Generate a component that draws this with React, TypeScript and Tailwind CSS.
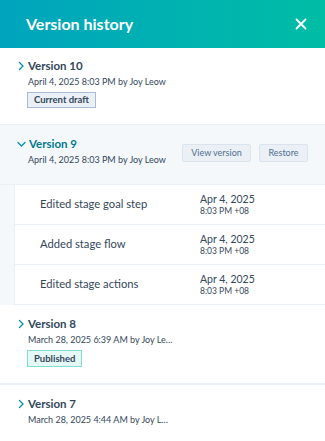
import { X } from 'lucide-react';

const font = { fontFamily: 'Lato, "Noto Sans", "Liberation Sans", sans-serif' };

function Chevron({ open }: { open?: boolean }) {
  if (open) {
    return (
      <svg width="9" height="9" viewBox="0 0 9 9" className="mr-[3px] shrink-0">
        <path d="M1 2.5 L4.5 6 L8 2.5" fill="none" stroke="#0091ae" strokeWidth="1.3" strokeLinecap="round" />
      </svg>
    );
  }
  return (
    <svg width="9" height="10" viewBox="0 0 9 10" className="mr-[2px] shrink-0">
      <path d="M2.5 1.5 L6 5 L2.5 8.5" fill="none" stroke="#0091ae" strokeWidth="1.3" strokeLinecap="round" />
    </svg>
  );
}

const changes = ['Edited stage goal step', 'Added stage flow', 'Edited stage actions'];

export default function App() {
  return (
    <div className="w-[325px] h-[441px] overflow-hidden bg-white text-[#33475b]" style={font}>
      <div className="h-[48px] flex items-center justify-between pl-[26px] pr-[15px] bg-gradient-to-r from-[#00a4bd] to-[#00bda5]">
        <h1 className="text-[16px] font-bold text-white">Version history</h1>
        <X className="w-[18px] h-[18px] text-white" strokeWidth={2.4} />
      </div>

      {/* Version 10 */}
      <div className="pt-[10px] pb-[16px] pl-[17px] border-b border-[#eaf0f6]">
        <div className="flex items-center h-[16px]">
          <Chevron />
          <span className="text-[11.5px] font-bold">Version 10</span>
        </div>
        <div className="pl-[11px] text-[9px] leading-[14px] mt-[1px]">April 4, 2025 8:03 PM by Joy Leow</div>
        <div className="flex pl-[10px] mt-[3px]">
          <span className="h-[16px] leading-[14px] px-[6px] text-[9.5px] font-bold bg-[#eaf0f6] border border-[#a8bcd3]">
            Current draft
          </span>
        </div>
      </div>

      {/* Version 9 */}
      <div className="bg-[#f5f8fa] h-[60px] pt-[11px] pl-[17px] pr-[17px] flex justify-between border-b border-[#eaf0f6]">
        <div>
          <div className="flex items-center h-[16px]">
            <Chevron open />
            <span className="text-[11.5px] font-bold text-[#007a8c]">Version 9</span>
          </div>
          <div className="pl-[11px] text-[9px] leading-[14px] mt-[1px]">April 4, 2025 8:03 PM by Joy Leow</div>
        </div>
        <div className="flex gap-[8px] pt-[8px]">
          <button className="h-[18px] w-[69px] text-[9px] text-[#516f90] bg-[#eaf0f6] border border-[#dbe3ec] rounded-[2px]">
            View version
          </button>
          <button className="h-[18px] w-[49px] text-[9px] text-[#516f90] bg-[#eaf0f6] border border-[#dbe3ec] rounded-[2px]">
            Restore
          </button>
        </div>
      </div>

      <div className="flex">
        <div className="w-[15px] bg-[#f5f8fa] border-r border-[#eaf0f6]" />
        <div className="flex-1">
          {changes.map((label) => (
            <div key={label} className="h-[40px] flex items-center border-b border-[#eaf0f6]">
              <div className="w-[185px] pl-[25px] text-[11.2px]">{label}</div>
              <div className="leading-none">
                <div className="text-[10.5px]">Apr 4, 2025</div>
                <div className="text-[8.5px] mt-[3px]">8:03 PM +08</div>
              </div>
            </div>
          ))}
        </div>
      </div>

      {/* Version 8 */}
      <div className="pt-[11px] pb-[16px] pl-[17px] border-b-2 border-[#eaf0f6]">
        <div className="flex items-center h-[16px]">
          <Chevron />
          <span className="text-[11.5px] font-bold">Version 8</span>
        </div>
        <div className="pl-[11px] text-[9px] leading-[14px] mt-[1px]">March 28, 2025 6:39 AM by Joy Le…</div>
        <div className="flex pl-[10px] mt-[3px]">
          <span className="h-[17px] leading-[15px] px-[6px] text-[9.5px] font-bold bg-[#e5f8f6] border border-[#7fded2]">
            Published
          </span>
        </div>
      </div>

      {/* Version 7 */}
      <div className="pt-[11px] pl-[17px]">
        <div className="flex items-center h-[16px]">
          <Chevron />
          <span className="text-[11.5px] font-bold">Version 7</span>
        </div>
        <div className="pl-[11px] text-[9px] leading-[14px] mt-[1px]">March 28, 2025 4:44 AM by Joy L…</div>
      </div>
    </div>
  );
}
